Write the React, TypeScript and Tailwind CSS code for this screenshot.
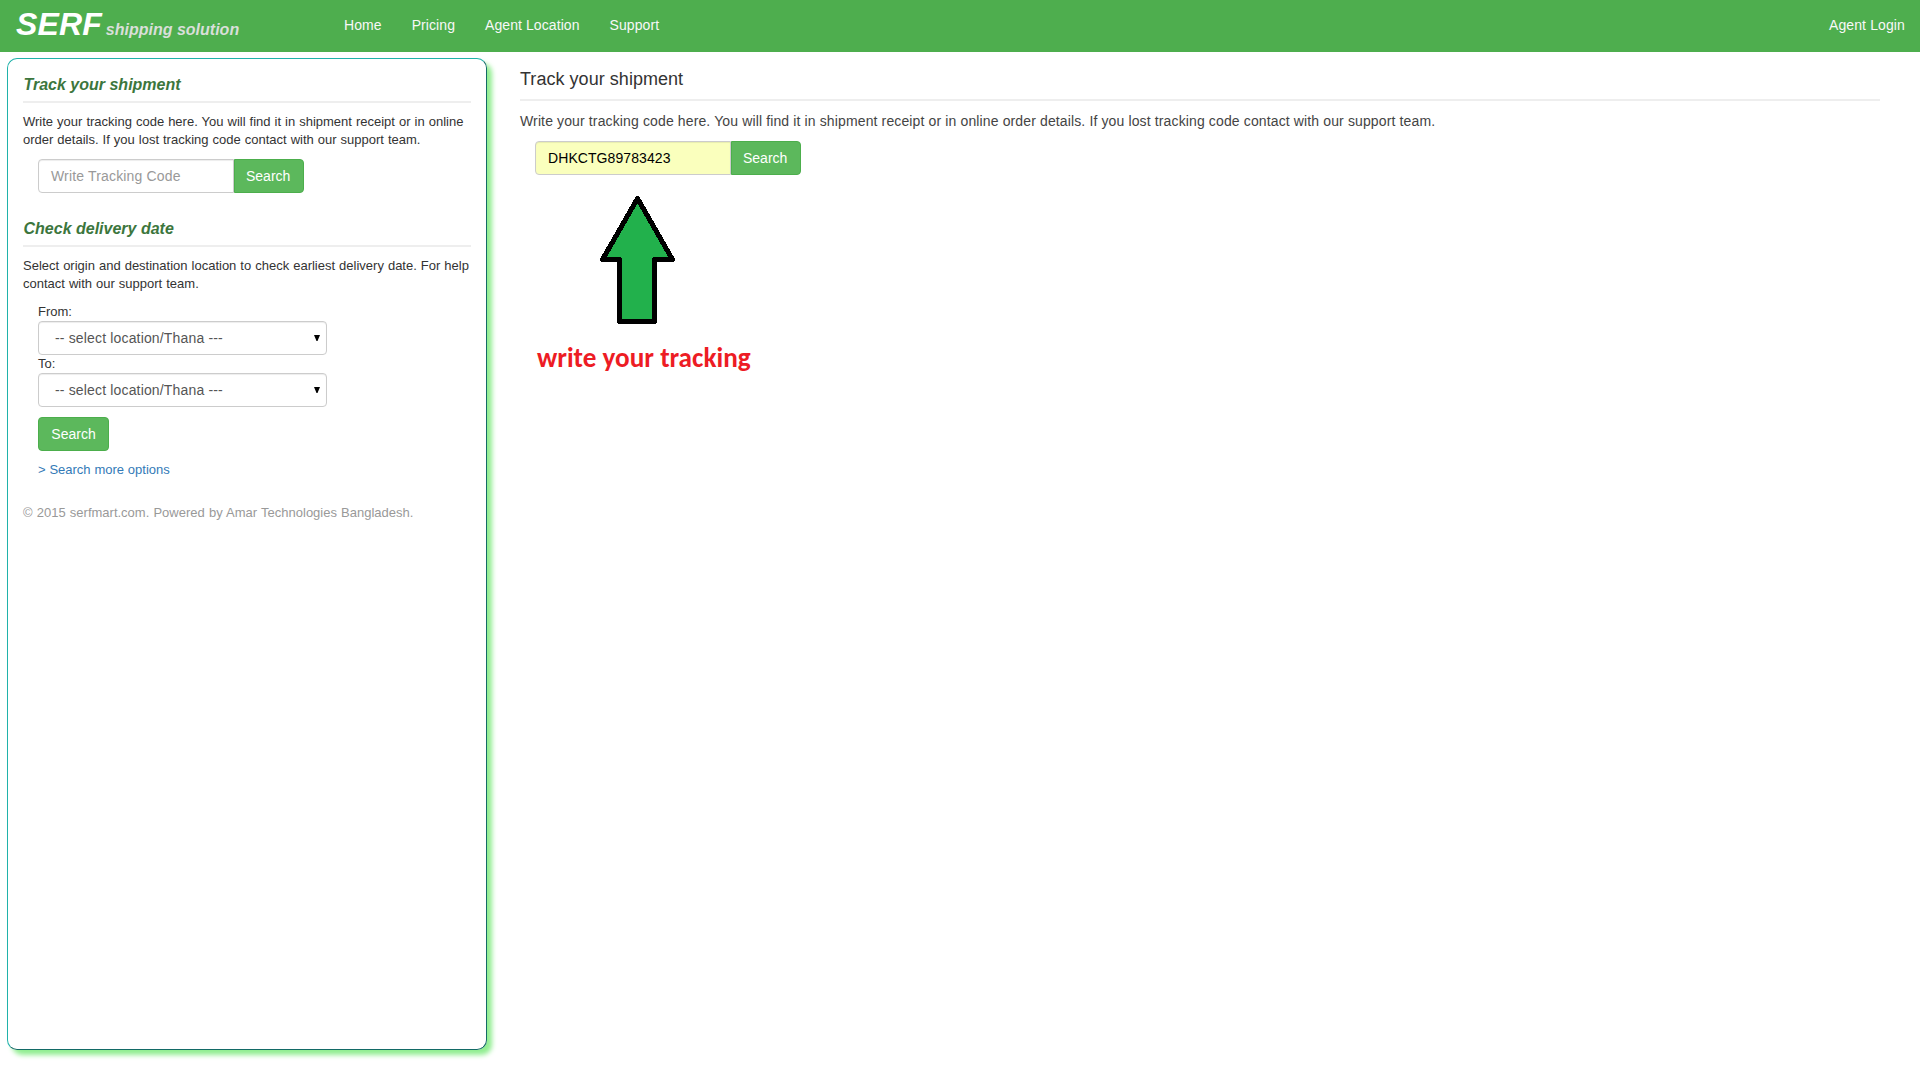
import { ReactNode } from "react";

const DESCRIPTION_A = "Write your tracking code here. You will find it in shipment receipt or in online";
const DESCRIPTION_B = "order details. If you lost tracking code contact with our support team.";

function Heading({ children }: { children: ReactNode }) {
  return (
    <h2 className="h-[28px] border-b-2 border-[#eeeeee] pt-px pl-[0.5px] text-[16px] leading-[18px] font-bold italic text-[#3c763d]">
      {children}
    </h2>
  );
}

function TrackingForm({ value, filled }: { value: string; filled?: boolean }) {
  return (
    <form className="ml-[15px] flex h-[34px]">
      <div
        className={
          filled
            ? "w-[196px] rounded-l border border-[#cccccc] bg-[#faffbd] px-3 text-[14px] leading-[32px] tracking-[0.08px] text-black shadow-[inset_0_1px_1px_rgba(0,0,0,0.075)]"
            : "w-[196px] rounded-l border border-[#cccccc] bg-white px-3 text-[14px] leading-[32px] tracking-[0.16px] text-[#999999] shadow-[inset_0_1px_1px_rgba(0,0,0,0.075)]"
        }
      >
        {value}
      </div>
      <button
        type="button"
        className="w-[70px] rounded-r border border-[#4cae4c] bg-[#5cb85c] pl-[11px] text-left text-[14px] leading-[32px] text-white"
      >
        Search
      </button>
    </form>
  );
}

function LocationSelect() {
  return (
    <div className="flex h-[34px] w-[289px] items-center justify-between rounded border border-[#cccccc] bg-white pr-[6px] pl-4 text-[14px] tracking-[0.16px] text-[#555555] shadow-[inset_0_1px_1px_rgba(0,0,0,0.075)]">
      <span>-- select location/Thana ---</span>
      <svg width="6" height="6" viewBox="0 0 6 6">
        <path d="M0 0h6L3.5 6h-1z" fill="#000" />
      </svg>
    </div>
  );
}

export default function App() {
  return (
    <div className="h-[1080px] w-[1920px] overflow-hidden bg-white font-['Liberation_Sans',Arial,sans-serif] text-[#333333]">
      <header className="flex h-[52px] bg-[#4eae4e] text-[14px] text-[#f8f8f8]">
        <div className="w-[329px] pl-4 font-bold italic leading-[48px]">
          <span className="text-[32px] tracking-[0.15px] text-white">SERF</span>{" "}
          <span className="text-[16px] text-[#d9dfd9]">shipping solution</span>
        </div>
        <nav className="flex leading-[50px] tracking-[0.08px]">
          <a className="px-[15px]">Home</a>
          <a className="px-[15px]">Pricing</a>
          <a className="px-[15px]">Agent Location</a>
          <a className="px-[15px]">Support</a>
        </nav>
        <a className="ml-auto pr-[15px] leading-[50px] tracking-[0.12px]">Agent Login</a>
      </header>

      <div className="flex">
        <aside className="mt-[6px] ml-[7px] h-[992px] w-[480px] rounded-[10px] border border-t-[#20b2aa] border-l-[#20b2aa] border-r-[#136a66] border-b-[#136a66] px-[15px] pt-4 text-[13px] leading-[18px] shadow-[5px_5px_5px_#90ee90]">
          <Heading>Track your shipment</Heading>
          <p className="mt-[10px] mb-[10px] whitespace-nowrap [word-spacing:0.4px]">
            {DESCRIPTION_A}
            <br />
            {DESCRIPTION_B}
          </p>
          <TrackingForm value="Write Tracking Code" />
          <div className="mt-[26px]">
            <Heading>Check delivery date</Heading>
          </div>
          <p className="mt-[10px] whitespace-nowrap [word-spacing:0.4px]">
            Select origin and destination location to check earliest delivery date. For help
            <br />
            contact with our support team.
          </p>
          <form className="mt-[10px] ml-[15px]">
            <label className="block h-[18px]">From:</label>
            <LocationSelect />
            <label className="block h-[18px]">To:</label>
            <LocationSelect />
            <button
              type="button"
              className="mt-[10px] block h-[34px] w-[71px] rounded border border-[#4cae4c] bg-[#5cb85c] text-[14px] leading-[32px] text-white"
            >
              Search
            </button>
            <a className="mt-[10px] block text-[#337ab7] [word-spacing:0.2px]">&gt; Search more options</a>
          </form>
          <footer className="mt-[25px] text-[#999999] [word-spacing:0.55px]">
            © 2015 serfmart.com. Powered by Amar Technologies Bangladesh.
          </footer>
        </aside>

        <main className="ml-[33px] w-[1360px] pt-[17px]">
          <h1 className="h-[32px] border-b-2 border-[#eeeeee] text-[18px] leading-[20px] tracking-[0.04px]">
            Track your shipment
          </h1>
          <p className="mt-[10px] mb-[10px] text-[14px] leading-[20px] tracking-[0.13px] text-[#444444]">
            {DESCRIPTION_A} {DESCRIPTION_B}
          </p>
          <TrackingForm value="DHKCTG89783423" filled />
          <svg className="mt-[20px] ml-[80px]" width="76" height="130" viewBox="600 195 76 130" shapeRendering="crispEdges">
            <path
              d="M637.5 198.5L672.5 259.5H654.5V321.5H619.5V259.5H602.5Z"
              fill="#22b14c"
              stroke="#000"
              strokeWidth="5"
              strokeLinejoin="round"
            />
          </svg>
          <p className="mt-[15px] ml-[17px] font-['Carlito','Calibri','Lato',sans-serif] text-[27.2px] leading-[36px] font-bold text-[#ed1c24]">
            write your tracking
          </p>
        </main>
      </div>
    </div>
  );
}
